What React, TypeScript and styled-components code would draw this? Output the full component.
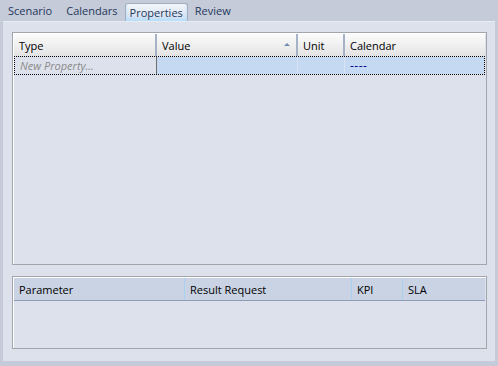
import styled, { createGlobalStyle } from "styled-components";

const GlobalStyle = createGlobalStyle`
  html, body {
    margin: 0;
    padding: 0;
    background: #c5cbd9;
  }
  body {
    font-family: "Open Sans", "Noto Sans", sans-serif;
    font-size: 11px;
  }
`;

const Window = styled.div`
  width: 498px;
  height: 366px;
  box-sizing: border-box;
  background: #c5cbd9;
  display: flex;
  flex-direction: column;
  padding: 0 3px 5px 3px;
`;

const TabBar = styled.div`
  height: 21px;
  display: flex;
  align-items: flex-end;
  margin-left: -2px;
`;

const Tab = styled.div<{ $active?: boolean }>`
  box-sizing: border-box;
  height: ${(p) => (p.$active ? "18px" : "21px")};
  padding: ${(p) => (p.$active ? "0 4px" : "0 7px")};
  display: flex;
  align-items: center;
  color: #1e395b;
  font-size: 11px;
  border: ${(p) => (p.$active ? "1px solid #a3aec2" : "none")};
  border-bottom: none;
  border-radius: 3px 3px 0 0;
  background: ${(p) =>
    p.$active
      ? "linear-gradient(to bottom, #f4f7fb 0%, #e2e9f4 50%, #c9ddf3 100%)"
      : "transparent"};
  box-shadow: ${(p) => (p.$active ? "inset 0 -2px 3px #b5e0fb" : "none")};
`;

const Panel = styled.div`
  flex: 1;
  background: #dde1eb;
  border-top: 1px solid #e8ebf2;
  display: flex;
  flex-direction: column;
  padding: 10px 8px 12px 9px;
  gap: 11px;
`;

const Grid = styled.div<{ $flex?: number; $height?: number }>`
  box-sizing: border-box;
  border: 1px solid #a2a6ab;
  box-shadow: inset 1px 1px 0 #ffffff;
  padding: 1px 1px 0 1px;
  flex: ${(p) => (p.$flex ? p.$flex : "none")};
  height: ${(p) => (p.$height ? `${p.$height}px` : "auto")};
  display: flex;
  flex-direction: column;
`;

const HeaderRow = styled.div`
  display: flex;
  height: 22px;
  background: linear-gradient(to bottom, #fbfbfb 0%, #f1f1f1 45%, #e3e3e3 100%);
`;

const HeaderCell = styled.div<{ $width: number; $last?: boolean }>`
  position: relative;
  box-sizing: border-box;
  width: ${(p) => p.$width}px;
  flex: ${(p) => (p.$last ? 1 : "none")};
  display: flex;
  align-items: center;
  padding-left: 5px;
  color: #000;
  font-size: 11px;
  border-right: ${(p) => (p.$last ? "none" : "2px solid #a6b3c6")};
`;

const SortArrow = styled.div`
  position: absolute;
  right: 6px;
  top: 9px;
  width: 0;
  height: 0;
  border-left: 3px solid transparent;
  border-right: 3px solid transparent;
  border-bottom: 3px solid #6f8cad;
`;

const DataRow = styled.div`
  display: flex;
  height: 19px;
  box-sizing: border-box;
  border: 1px dotted #000;
`;

const DataCell = styled.div<{ $width: number; $first?: boolean; $last?: boolean }>`
  box-sizing: border-box;
  width: ${(p) => p.$width}px;
  flex: ${(p) => (p.$last ? 1 : "none")};
  display: flex;
  align-items: center;
  padding-left: 5px;
  background: ${(p) => (p.$first ? "#dde1eb" : "#c6d9f3")};
  border-right: ${(p) =>
    p.$first ? "1px solid #6d6d6d" : p.$last ? "none" : "1px solid #d8e4f5"};
`;

const Placeholder = styled.span`
  color: #8a8a8a;
  font-style: italic;
  font-size: 11px;
`;

const Dashes = styled.span`
  color: #00008b;
  font-size: 12px;
  letter-spacing: 0.5px;
`;

const ResultHeader = styled.div`
  display: flex;
  height: 22px;
  background: #c9d3e3;
  border-bottom: 1px solid #8e9cb8;
`;

const ResultCell = styled.div<{ $width: number; $last?: boolean }>`
  box-sizing: border-box;
  width: ${(p) => p.$width}px;
  flex: ${(p) => (p.$last ? 1 : "none")};
  display: flex;
  align-items: center;
  padding-left: 5px;
  color: #000;
  font-size: 11px;
  border-right: ${(p) => (p.$last ? "none" : "1px solid #a9d2f0")};
`;

const Body = styled.div`
  flex: 1;
`;

export default function App() {
  return (
    <>
      <GlobalStyle />
      <Window>
        <TabBar>
          <Tab>Scenario</Tab>
          <Tab>Calendars</Tab>
          <Tab $active>Properties</Tab>
          <Tab>Review</Tab>
        </TabBar>
        <Panel>
          <Grid $flex={1}>
            <HeaderRow>
              <HeaderCell $width={143}>Type</HeaderCell>
              <HeaderCell $width={141}>
                Value
                <SortArrow />
              </HeaderCell>
              <HeaderCell $width={47}>Unit</HeaderCell>
              <HeaderCell $width={140} $last>
                Calendar
              </HeaderCell>
            </HeaderRow>
            <DataRow>
              <DataCell $width={142} $first>
                <Placeholder>New Property...</Placeholder>
              </DataCell>
              <DataCell $width={141} />
              <DataCell $width={47} />
              <DataCell $width={140} $last>
                <Dashes>----</Dashes>
              </DataCell>
            </DataRow>
            <Body />
          </Grid>
          <Grid $height={73}>
            <ResultHeader>
              <ResultCell $width={171}>Parameter</ResultCell>
              <ResultCell $width={167}>Result Request</ResultCell>
              <ResultCell $width={51}>KPI</ResultCell>
              <ResultCell $width={80} $last>
                SLA
              </ResultCell>
            </ResultHeader>
            <Body />
          </Grid>
        </Panel>
      </Window>
    </>
  );
}
